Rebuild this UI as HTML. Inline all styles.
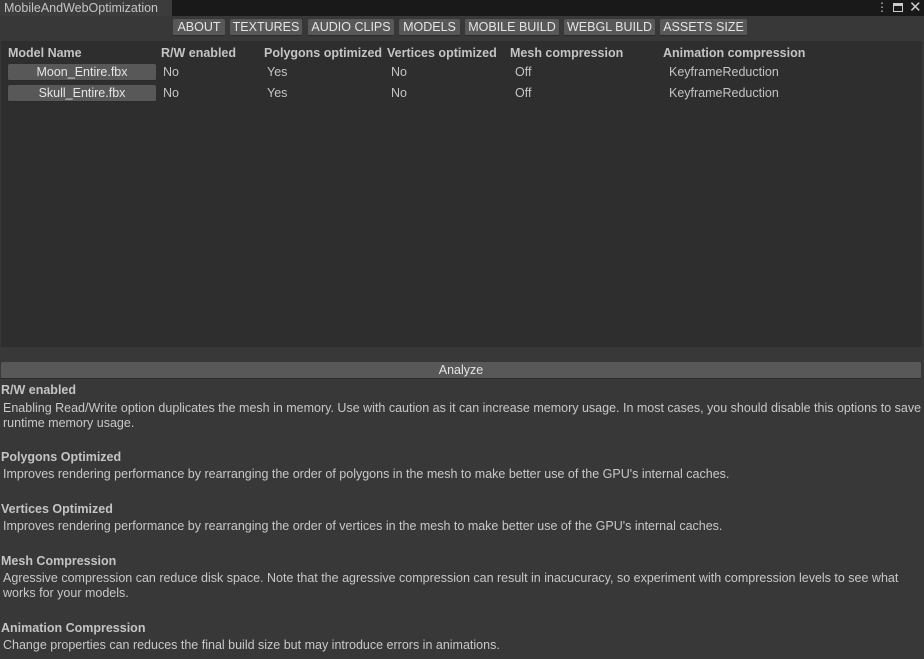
<!DOCTYPE html>
<html><head><style>
*{margin:0;padding:0;box-sizing:border-box}
body{width:924px;height:659px;background:#383838;font-family:"Liberation Sans",sans-serif;font-size:12px;color:#d2d2d2;position:relative;overflow:hidden}
.abs{position:absolute;white-space:nowrap}
.top{left:0;top:0;width:924px;height:16px;background:#191919}
.tab{left:0;top:0;width:172px;height:16px;background:#3c3c3c;color:#c4c4c4;padding-left:4px;line-height:16px;font-size:12.5px}
.btn{background:#585858;border-radius:2px;color:#e4e4e4;height:17px;line-height:17px;text-align:center;font-size:12.5px;border-bottom:1px solid #2a2a2a}
.panel{left:1px;top:41px;width:921px;height:306px;background:#2e2e2e}
.h{font-weight:bold;color:#c4c4c4;font-size:12.5px}
.v{color:#c4c4c4;font-size:12.5px}
.d{color:#c8c8c8;font-size:12.5px;line-height:15px;white-space:normal;width:920px}
</style></head><body>
<div class="abs top"></div>
<div class="abs tab">MobileAndWebOptimization</div>
<div class="abs" style="left:876px;top:0;color:#ccc;font-size:12px">⋮</div>
<div class="abs" style="left:893px;top:3px;width:10px;height:9px;border:1.5px solid #ccc;border-top-width:3px"></div>
<div class="abs" style="left:909px;top:-2px;color:#ccc;font-size:15px">✕</div>

<div class="abs btn" style="left:173px;top:19px;width:52px">ABOUT</div>
<div class="abs btn" style="left:230px;top:19px;width:72px">TEXTURES</div>
<div class="abs btn" style="left:308px;top:19px;width:86px">AUDIO CLIPS</div>
<div class="abs btn" style="left:399px;top:19px;width:61px">MODELS</div>
<div class="abs btn" style="left:465px;top:19px;width:94px">MOBILE BUILD</div>
<div class="abs btn" style="left:564px;top:19px;width:91px">WEBGL BUILD</div>
<div class="abs btn" style="left:660px;top:19px;width:87px">ASSETS SIZE</div>

<div class="abs panel"></div>
<div class="abs h" style="left:8px;top:46px">Model Name</div>
<div class="abs h" style="left:161px;top:46px">R/W enabled</div>
<div class="abs h" style="left:264px;top:46px">Polygons optimized</div>
<div class="abs h" style="left:387px;top:46px">Vertices optimized</div>
<div class="abs h" style="left:510px;top:46px">Mesh compression</div>
<div class="abs h" style="left:663px;top:46px">Animation compression</div>

<div class="abs btn" style="left:8px;top:64px;width:148px">Moon_Entire.fbx</div>
<div class="abs btn" style="left:8px;top:85px;width:148px">Skull_Entire.fbx</div>
<div class="abs v" style="left:163px;top:65px">No</div><div class="abs v" style="left:267px;top:65px">Yes</div><div class="abs v" style="left:391px;top:65px">No</div><div class="abs v" style="left:515px;top:65px">Off</div><div class="abs v" style="left:669px;top:65px">KeyframeReduction</div>
<div class="abs v" style="left:163px;top:86px">No</div><div class="abs v" style="left:267px;top:86px">Yes</div><div class="abs v" style="left:391px;top:86px">No</div><div class="abs v" style="left:515px;top:86px">Off</div><div class="abs v" style="left:669px;top:86px">KeyframeReduction</div>

<div class="abs btn" style="left:1px;top:362px;width:920px;height:17px">Analyze</div>

<div class="abs h" style="left:1px;top:383px">R/W enabled</div>
<div class="abs d" style="left:3px;top:401px">Enabling Read/Write option duplicates the mesh in memory. Use with caution as it can increase memory usage. In most cases, you should disable this options to save runtime memory usage.</div>
<div class="abs h" style="left:1px;top:450px">Polygons Optimized</div>
<div class="abs d" style="left:3px;top:467px">Improves rendering performance by rearranging the order of polygons in the mesh to make better use of the GPU's internal caches.</div>
<div class="abs h" style="left:1px;top:502px">Vertices Optimized</div>
<div class="abs d" style="left:3px;top:519px">Improves rendering performance by rearranging the order of vertices in the mesh to make better use of the GPU's internal caches.</div>
<div class="abs h" style="left:1px;top:554px">Mesh Compression</div>
<div class="abs d" style="left:3px;top:571px">Agressive compression can reduce disk space. Note that the agressive compression can result in inacucuracy, so experiment with compression levels to see what works for your models.</div>
<div class="abs h" style="left:1px;top:621px">Animation Compression</div>
<div class="abs d" style="left:3px;top:638px">Change properties can reduces the final build size but may introduce errors in animations.</div>
</body></html>
